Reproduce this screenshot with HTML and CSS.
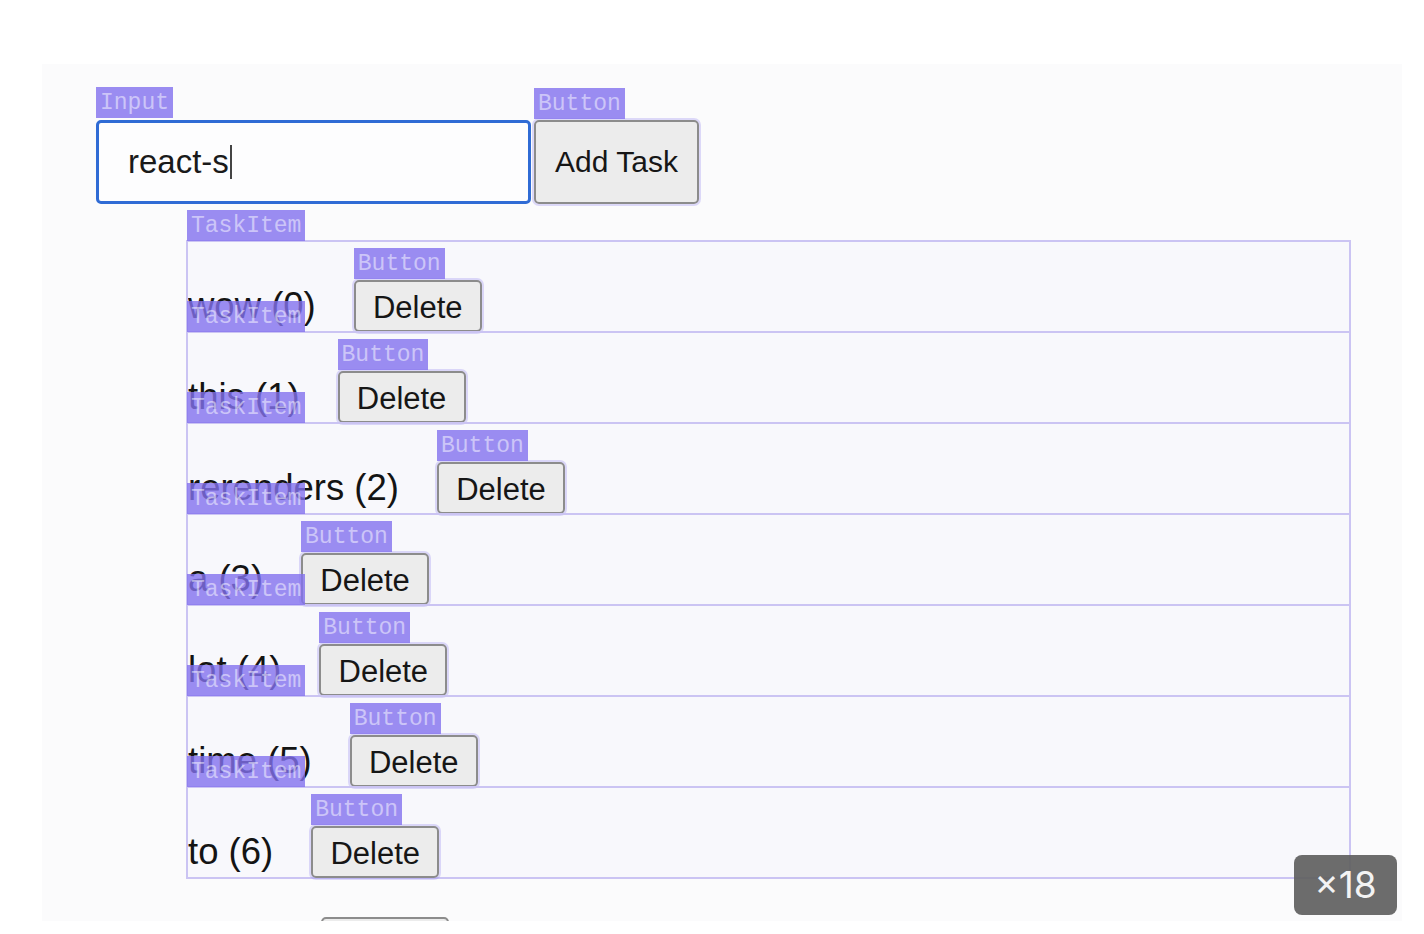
FILE: index.html
```html
<!DOCTYPE html>
<html lang="en">
<head>
<meta charset="utf-8">
<title>Task list</title>
<link rel="stylesheet" href="styles.css">
</head>
<body>
<div class="frame">
  <div class="toolbar">
    <div class="comp comp-input">
      <span class="tag">Input</span>
      <div class="field"><span class="value">react-s</span><span class="caret"></span></div>
    </div>
    <div class="comp">
      <span class="tag">Button</span>
      <button class="btn btn-add">Add Task</button>
    </div>
  </div>
  <ul class="list">
    <li class="row"><span class="tag">TaskItem</span><span class="label">wow (0)</span><span class="comp"><span class="tag">Button</span><button class="btn btn-del">Delete</button></span></li>
    <li class="row"><span class="tag">TaskItem</span><span class="label">this (1)</span><span class="comp"><span class="tag">Button</span><button class="btn btn-del">Delete</button></span></li>
    <li class="row"><span class="tag">TaskItem</span><span class="label">rerenders (2)</span><span class="comp"><span class="tag">Button</span><button class="btn btn-del">Delete</button></span></li>
    <li class="row"><span class="tag">TaskItem</span><span class="label">a (3)</span><span class="comp"><span class="tag">Button</span><button class="btn btn-del">Delete</button></span></li>
    <li class="row"><span class="tag">TaskItem</span><span class="label">lot (4)</span><span class="comp"><span class="tag">Button</span><button class="btn btn-del">Delete</button></span></li>
    <li class="row"><span class="tag">TaskItem</span><span class="label">time (5)</span><span class="comp"><span class="tag">Button</span><button class="btn btn-del">Delete</button></span></li>
    <li class="row"><span class="tag">TaskItem</span><span class="label">to (6)</span><span class="comp"><span class="tag">Button</span><button class="btn btn-del">Delete</button></span></li>
    <li class="row row-plain"><span class="label">go (7)</span><span class="comp"><button class="btn btn-del btn-plain">Delete</button></span></li>
  </ul>
  <div class="badge">×18</div>
</div>
</body>
</html>
```
FILE: styles.css
```css
html, body {
  margin: 0;
  padding: 0;
  background: #ffffff;
}

body {
  font-family: "Liberation Sans", Arial, sans-serif;
  color: #161616;
}

.frame {
  position: relative;
  margin: 64px 0 0 42px;
  width: 1360px;
  height: 857px;
  box-sizing: border-box;
  padding: 56px 0 0 54px;
  background: #fbfbfc;
  overflow: hidden;
}

.toolbar {
  display: flex;
  gap: 3px;
}

.comp {
  position: relative;
  display: inline-block;
}

.tag {
  position: absolute;
  left: 0;
  bottom: calc(100% + 1px);
  z-index: 5;
  height: 31px;
  padding: 0 4px;
  background: rgba(130, 112, 238, 0.8);
  color: rgba(255, 255, 255, 0.5);
  font-family: "Liberation Mono", "DejaVu Sans Mono", monospace;
  font-size: 23px;
  line-height: 32px;
  white-space: nowrap;
}

.comp-input .tag {
  bottom: calc(100% + 2px);
}

.field {
  display: flex;
  align-items: center;
  width: 435px;
  height: 84px;
  box-sizing: border-box;
  padding-left: 29px;
  border: 3px solid #2f6bd5;
  border-radius: 5px;
  background: #fdfdfe;
  font-size: 33px;
  color: #1a1a1a;
}

.caret {
  display: inline-block;
  width: 2px;
  height: 34px;
  margin-left: 1px;
  background: #444;
}

.btn {
  display: block;
  box-sizing: border-box;
  margin: 0;
  border: 2px solid #8c8c8c;
  border-radius: 5px;
  background: #ececec;
  color: #161616;
  font-family: "Liberation Sans", Arial, sans-serif;
  padding: 0;
  outline: 2px solid rgba(150, 135, 238, 0.3);
}

.btn-add {
  width: 165px;
  height: 84px;
  font-size: 30px;
}

.list {
  list-style: none;
  margin: 37px 0 0 91px;
  padding: 0;
  width: 1163px;
}

.row {
  position: relative;
  display: flex;
  align-items: center;
  height: 91px;
  box-sizing: border-box;
  padding-top: 39px;
  outline: 2px solid #cbc4f3;
  outline-offset: -1px;
  background: rgba(130, 112, 238, 0.025);
}

.row > .tag {
  bottom: 100%;
}

.row-plain {
  outline: none;
  background: transparent;
}

.label {
  font-size: 36.5px;
  line-height: 42px;
  color: #141414;
  white-space: nowrap;
  margin-top: -1px;
  padding-left: 1px;
}

.row .comp {
  margin-left: 38px;
}

.btn-del {
  width: 128px;
  height: 52px;
  font-size: 31px;
  line-height: 1;
  padding-top: 2px;
}

.btn-plain {
  outline: none;
}

.badge {
  position: absolute;
  right: 5px;
  bottom: 6px;
  z-index: 10;
  width: 103px;
  height: 60px;
  border-radius: 8px;
  background: rgba(96, 96, 96, 0.92);
  color: #f3f3f3;
  font-family: Inter, "Liberation Sans", sans-serif;
  font-size: 37px;
  line-height: 60px;
  text-align: center;
}
```
